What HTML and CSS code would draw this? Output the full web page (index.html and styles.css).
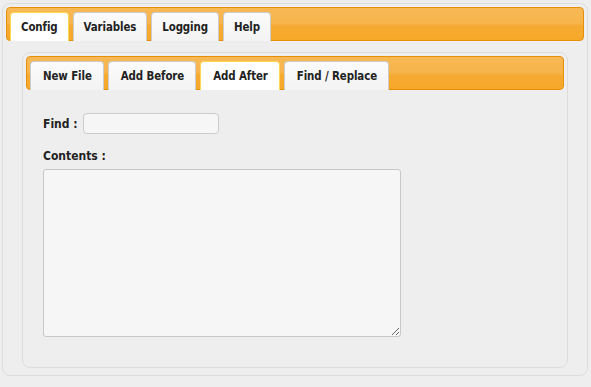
FILE: index.html
```html
<!DOCTYPE html>
<html>
  <head>
    <title>Config</title>
    <link rel="stylesheet" href="styles.css">
  </head>
  <body>
    <div class="widget outer">
      <ul class="tabs-nav main-nav">
        <li class="tab active">Config</li>
        <li class="tab">Variables</li>
        <li class="tab">Logging</li>
        <li class="tab">Help</li>
      </ul>
      <div class="panel outer-panel">
        <div class="widget inner">
          <ul class="tabs-nav">
            <li class="tab">New File</li>
            <li class="tab">Add Before</li>
            <li class="tab active">Add After</li>
            <li class="tab">Find / Replace</li>
          </ul>
          <div class="panel inner-panel">
            <form class="edit-form">
              <div class="find-row">
                <label for="find">Find :</label>
                <input type="text" id="find" name="find">
              </div>
              <label for="contents">Contents :</label>
              <textarea id="contents" name="contents"></textarea>
            </form>
          </div>
        </div>
      </div>
    </div>
  </body>
</html>
```

FILE: styles.css
```css
body {
  margin: 0;
  background: #eeeeee;
  font-family: "DejaVu Sans Condensed", "DejaVu Sans", sans-serif;
  font-size: 12px;
  font-weight: bold;
  color: #222;
}

.widget {
  border: 1px solid #dddddd;
  border-radius: 8px;
  background: #eeeeee;
  padding: 3px;
}

.outer {
  margin: 3px 3px 3px 2px;
  height: 373px;
  box-sizing: border-box;
}

.tabs-nav {
  display: flex;
  align-items: flex-end;
  margin: 0;
  padding: 4px 3px 0;
  list-style: none;
  height: 34px;
  box-sizing: border-box;
  border: 1px solid #e78f08;
  border-radius: 4px;
  background: linear-gradient(#f7b955, #f7b44b 48%, #f5aa32 56%, #f6a828);
}

.tab {
  margin: 0 4px -1px 0;
  padding: 7px 11px 0 12px;
  height: 29px;
  box-sizing: border-box;
  border: 1px solid #cccccc;
  border-bottom: 0;
  border-radius: 4px 4px 0 0;
  background: linear-gradient(#fbfbfb, #f3f3f3);
  color: #222;
  font-size: 11.4px;
  letter-spacing: -0.1px;
}

.main-nav .tab {
  padding: 7px 10px 0 10px;
}

.tab.active {
  background: #ffffff;
  border-color: #fbd850;
}

.outer-panel {
  padding: 11px 16px 0 16px;
}

.inner {
  height: 316px;
  box-sizing: border-box;
}

.inner-panel {
  padding: 23px 17px 0;
}

.edit-form {
  display: flex;
  flex-direction: column;
  align-items: flex-start;
}

.find-row {
  display: flex;
  align-items: center;
  gap: 5px;
  margin-bottom: 15px;
}

#find {
  width: 136px;
  height: 21px;
  box-sizing: border-box;
  border: 1px solid #cccccc;
  border-radius: 4px;
  background: #f6f6f6;
  margin: 0;
}

label {
  line-height: 14px;
}

#contents {
  margin-top: 6px;
  width: 358px;
  height: 168px;
  box-sizing: border-box;
  border: 1px solid #c8c8c8;
  border-radius: 3px;
  background: #f6f6f6;
}
```
